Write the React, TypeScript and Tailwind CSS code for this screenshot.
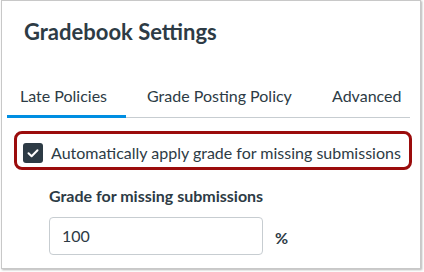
import React from "react";

export default function App() {
  const font = { fontFamily: "Lato, 'Noto Sans', sans-serif" };
  return (
    <div className="w-[424px] h-[272px] bg-white pl-[1px] text-[#2d3b45]" style={font}>
      <div className="w-[420px] h-[269px] border border-[#c8c8c8] shadow-[1px_1px_2px_rgba(0,0,0,0.3)] bg-white">
        <div className="pl-[22px] pt-[19px] text-[22px] leading-[24px] font-bold">Gradebook Settings</div>
        <div className="ml-[5px] mt-[42px] w-[403px] flex border-b border-[#c7cdd1] text-[16px] leading-[20px]">
          <div className="w-[119px] pl-[13px] pb-[9px] border-b-[3px] border-[#008ee2] -mb-px">Late Policies</div>
          <div className="w-[198px] pl-[21px] pb-[9px]">Grade Posting Policy</div>
          <div className="pl-[8px] pb-[9px]">Advanced</div>
        </div>
        <div className="ml-[12px] mt-[13px] w-[398px] h-[39px] border-[3px] border-[#9b0c0c] rounded-[8px] flex items-start gap-[8px] pl-[6px] pt-[9px]">
          <div className="w-[20px] h-[20px] rounded-[3px] bg-[#2d3b45] flex items-center justify-center">
            <svg width="20" height="20" viewBox="0 0 20 20">
              <path d="M5.5 10.2 L8.6 13.2 L14.5 7.2" fill="none" stroke="white" strokeWidth="2" strokeLinecap="round" strokeLinejoin="round" />
            </svg>
          </div>
          <div className="text-[16px] leading-[20px]">Automatically apply grade for missing submissions</div>
        </div>
        <div className="ml-[47px] mt-[16px] text-[16px] leading-[20px] font-bold">Grade for missing submissions</div>
        <div className="ml-[47px] mt-[11px] flex items-center gap-[12px]">
          <div className="w-[214px] h-[38px] border border-[#c7cdd1] rounded-[4px] pl-[12px] flex items-center text-[16px] leading-[20px]">100</div>
          <div className="text-[16px] leading-[20px] font-bold mt-[3px]">%</div>
        </div>
      </div>
    </div>
  );
}
